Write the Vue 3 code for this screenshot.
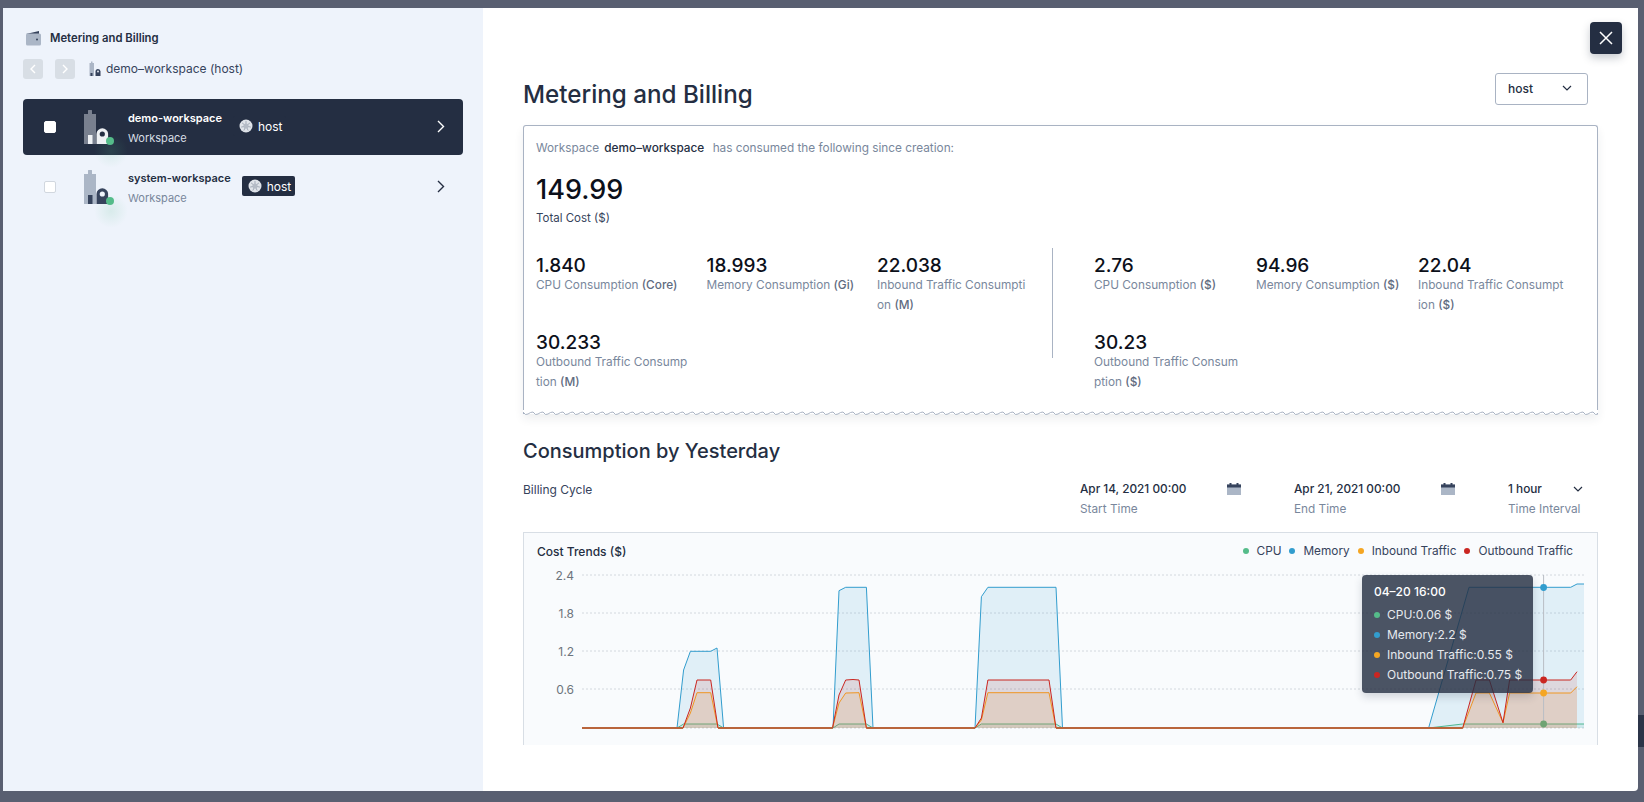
<template>
  <div class="page">
    <div class="peek-btn"></div>
    <div class="modal">
      <aside class="sidebar">
        <div class="side-head">
          <svg class="wallet" width="16" height="16" viewBox="0 0 16 16">
            <path d="M1 4 L14 1 V4 Z" fill="#36435c" />
            <rect x="1" y="3.5" width="15" height="12" rx="1.5" fill="#abb6c6" />
            <circle cx="12" cy="9.5" r="1" fill="#36435c" />
          </svg>
          <span>Metering and Billing</span>
        </div>
        <div class="side-nav">
          <button class="nav-btn">
            <svg width="8" height="12" viewBox="0 0 8 12"><path d="M6 2 L2 6 L6 10" fill="none" stroke="#fff" stroke-width="1.4" /></svg>
          </button>
          <button class="nav-btn">
            <svg width="8" height="12" viewBox="0 0 8 12"><path d="M2 2 L6 6 L2 10" fill="none" stroke="#fff" stroke-width="1.4" /></svg>
          </button>
          <svg class="crumb-icon" width="12" height="16" viewBox="0 0 12 16">
            <path d="M2 0.5 H3.5 V2 H5 V15 H0.5 V2 H2 Z" fill="#abb6c6" />
            <rect x="1.5" y="12" width="2" height="3" fill="#36435c" />
            <path d="M6.5 15 V10.5 a2.5 2.5 0 0 1 5 0 V15 Z" fill="#36435c" />
            <circle cx="9" cy="10.5" r="0.9" fill="#eff4fb" />
          </svg>
          <span class="crumb">demo–workspace (host)</span>
        </div>

        <div class="rows">
          <div v-for="w in workspaces" :key="w.name" class="row" :class="{ active: w.active }">
            <span class="check"></span>
            <div class="ws-icon">
              <svg width="30" height="36" viewBox="0 0 30 36">
                <path d="M4 0.5 Q4 0 4.5 0 H7.5 Q8 0 8 0.5 V4 H12 V34 H0 V4 H4 Z" :fill="w.active ? '#79808f' : '#abb6c6'" />
                <rect x="4" y="25" width="4.5" height="9" :fill="w.active ? '#eff1f4' : '#36435c'" />
                <path d="M12.5 34 V24 a5.8 5.8 0 0 1 11.6 0 V34 Z" :fill="w.active ? '#eff1f4' : '#36435c'" />
                <circle cx="18.3" cy="24" r="2.6" :fill="w.active ? '#242e42' : '#eff4fb'" />
                <circle cx="26" cy="31" r="4" fill="#55bc8a" />
              </svg>
              <span class="glow"></span>
            </div>
            <div class="ws-text">
              <div class="ws-name">{{ w.name }}</div>
              <div class="ws-sub">Workspace</div>
            </div>
            <div class="tag">
              <svg width="14" height="14" viewBox="0 0 14 14">
                <circle cx="7" cy="7" r="6.5" fill="#dfe3e9" />
                <g stroke="#a3abb8" stroke-width="1">
                  <line v-for="a in spokes" :key="a" x1="7" y1="7" :x2="7 + 5 * Math.cos(a)" :y2="7 + 5 * Math.sin(a)" />
                </g>
                <circle cx="7" cy="7" r="2.6" fill="#b4bbc6" />
              </svg>
              <span>host</span>
            </div>
            <svg class="chev" width="8" height="13" viewBox="0 0 8 13">
              <path d="M1 1 L6.5 6.5 L1 12" fill="none" :stroke="w.active ? '#fff' : '#242e42'" stroke-width="1.4" />
            </svg>
          </div>
        </div>
      </aside>

      <main class="main">
        <button class="close">
          <svg width="14" height="14" viewBox="0 0 14 14"><path d="M1 1 L13 13 M13 1 L1 13" stroke="#fff" stroke-width="1.5" /></svg>
        </button>

        <div class="title-row">
          <h1>Metering and Billing</h1>
          <div class="select">
            <span>host</span>
            <svg width="10" height="6" viewBox="0 0 10 6"><path d="M1 1 L5 5 L9 1" fill="none" stroke="#242e42" stroke-width="1.2" /></svg>
          </div>
        </div>

        <section class="card">
          <p class="intro">Workspace <b>demo–workspace</b> has consumed the following since creation:</p>
          <div class="total">149.99</div>
          <div class="total-label">Total Cost ($)</div>
          <div class="stats">
            <div class="stat-grid left">
              <div v-for="s in usage" :key="s.label" class="stat">
                <div class="stat-value">{{ s.value }}</div>
                <div class="stat-label">{{ s.label }} <b>{{ s.unit }}</b></div>
              </div>
            </div>
            <div class="divider"></div>
            <div class="stat-grid right">
              <div v-for="s in costs" :key="s.label" class="stat">
                <div class="stat-value">{{ s.value }}</div>
                <div class="stat-label">{{ s.label }} <b>{{ s.unit }}</b></div>
              </div>
            </div>
          </div>
          <svg class="wave" width="100%" height="8">
            <defs>
              <pattern id="wavy" width="10" height="8" patternUnits="userSpaceOnUse">
                <path d="M0 2 Q2.5 6 5 4 T10 2" fill="none" stroke="#a9b3c3" stroke-width="1" />
              </pattern>
            </defs>
            <rect width="100%" height="8" fill="url(#wavy)" />
          </svg>
        </section>

        <h2>Consumption by Yesterday</h2>

        <div class="filters">
          <span class="cycle">Billing Cycle</span>
          <div class="filter-items">
            <div v-for="d in dates" :key="d.label" class="filter date">
              <div class="filter-top">
                <span>{{ d.value }}</span>
                <svg width="14" height="12" viewBox="0 0 14 12">
                  <rect x="0" y="1.5" width="14" height="10.5" fill="#abb6c6" />
                  <rect x="0" y="1.5" width="14" height="3" fill="#36435c" />
                  <rect x="2.5" y="0" width="2" height="2" fill="#36435c" />
                  <rect x="9.5" y="0" width="2" height="2" fill="#36435c" />
                </svg>
              </div>
              <div class="filter-sub">{{ d.label }}</div>
            </div>
            <div class="filter interval">
              <div class="filter-top">
                <span>1 hour</span>
                <svg width="10" height="6" viewBox="0 0 10 6"><path d="M1 1 L5 5 L9 1" fill="none" stroke="#242e42" stroke-width="1.2" /></svg>
              </div>
              <div class="filter-sub">Time Interval</div>
            </div>
          </div>
        </div>

        <section class="chart">
          <div class="chart-head">
            <span class="chart-title">Cost Trends ($)</span>
            <div class="legend">
              <span v-for="s in series" :key="s.name" class="legend-item">
                <i :style="{ background: s.color }"></i>{{ s.name }}
              </span>
            </div>
          </div>

          <svg class="plot" width="1073" height="172" viewBox="524 573 1073 172">
            <g v-for="t in ticks" :key="t.label">
              <line x1="582" :x2="1584" :y1="t.y" :y2="t.y" stroke="#d3d8de" stroke-dasharray="2 2" />
              <text x="574" :y="t.y + 5" text-anchor="end" class="tick">{{ t.label }}</text>
            </g>
            <line x1="582" x2="1584" y1="728" y2="728" stroke="#d3d8de" stroke-dasharray="2 2" />
            <g v-for="s in series" :key="s.name + '-line'">
              <polygon :points="areaPoints(s.points)" :fill="s.color" fill-opacity="0.12" />
              <polyline :points="linePoints(s.points)" fill="none" :stroke="s.color" />
            </g>
            <path :d="baseline" stroke="#b9653c" stroke-width="2" fill="none" />
            <line x1="1543.6" x2="1543.6" y1="575" y2="728" stroke="#b9bdc4" />
            <circle v-for="m in markers" :key="m.color" cx="1543.6" :cy="m.y" r="3.4" :fill="m.color" />
          </svg>

          <div class="tooltip">
            <div class="tip-title">04–20 16:00</div>
            <div v-for="t in tooltip" :key="t.text" class="tip-row">
              <i :style="{ background: t.color }"></i>{{ t.text }}
            </div>
          </div>
        </section>
      </main>
    </div>
  </div>
</template>

<script setup>
const workspaces = [
  { name: "demo-workspace", active: true },
  { name: "system-workspace", active: false },
];

// seven spokes of the cluster wheel
const spokes = Array.from({ length: 7 }, (_, i) => (i * 2 * Math.PI) / 7 - Math.PI / 2);

const usage = [
  { value: "1.840", label: "CPU Consumption", unit: "(Core)" },
  { value: "18.993", label: "Memory Consumption", unit: "(Gi)" },
  { value: "22.038", label: "Inbound Traffic Consumption", unit: "(M)" },
  { value: "30.233", label: "Outbound Traffic Consumption", unit: "(M)" },
];

const costs = [
  { value: "2.76", label: "CPU Consumption", unit: "($)" },
  { value: "94.96", label: "Memory Consumption", unit: "($)" },
  { value: "22.04", label: "Inbound Traffic Consumption", unit: "($)" },
  { value: "30.23", label: "Outbound Traffic Consumption", unit: "($)" },
];

const dates = [
  { value: "Apr 14, 2021 00:00", label: "Start Time" },
  { value: "Apr 21, 2021 00:00", label: "End Time" },
];

const ticks = [
  { label: "2.4", y: 575 },
  { label: "1.8", y: 613 },
  { label: "1.2", y: 651 },
  { label: "0.6", y: 689 },
];

const series = [
  {
    name: "CPU",
    color: "#55bc8a",
    points: [
      [582, 728], [677, 728], [683.6, 724], [717, 724], [723.6, 728], [833, 728], [839, 724], [866.4, 724],
      [873, 728], [975, 728], [981.4, 724], [1056, 724], [1062.5, 728], [1428.6, 728], [1462.7, 724], [1584, 724],
    ],
  },
  {
    name: "Memory",
    color: "#329dce",
    points: [
      [582, 728], [677, 728], [683.6, 670], [690.4, 651.3], [710.7, 651.3], [717, 648], [723.6, 728],
      [833, 728], [839, 590.7], [845.7, 587.3], [866.4, 587.3], [873, 728],
      [975, 728], [981.4, 596.7], [987.9, 587.3], [1056, 587.3], [1062.5, 728],
      [1428.6, 728], [1469, 587.3], [1570.7, 587.3], [1577, 584], [1584, 584],
    ],
  },
  {
    name: "Inbound Traffic",
    color: "#f5a623",
    points: [
      [582, 728], [683, 728], [690.4, 713], [697, 692.7], [710.7, 692.7], [718, 728],
      [832.5, 728], [839, 703], [845.7, 693], [859, 692.7], [866.4, 728],
      [975, 728], [981.4, 720], [987.9, 692.7], [1049, 692.7], [1056, 728],
      [1462.7, 728], [1476, 693], [1489.4, 693], [1503, 722.7], [1509.6, 693], [1570.7, 693], [1577, 686.7],
    ],
  },
  {
    name: "Outbound Traffic",
    color: "#ca2621",
    points: [
      [582, 728], [683, 728], [690.4, 708], [697, 680], [710.7, 680], [718, 728],
      [832.5, 728], [839, 695], [845.7, 680], [853, 679.5], [859, 680], [866.4, 728],
      [975, 728], [981.4, 718], [987.9, 680], [1049, 680], [1056, 728],
      [1462.7, 728], [1476, 680], [1489.4, 680], [1503, 722.7], [1509.6, 680], [1570.7, 680], [1577, 671.7],
    ],
  },
];

const baseline = "M582 728 H683 M718 728 H832.5 M866.4 728 H975 M1056 728 H1462.7";

const markers = [
  { color: "#329dce", y: 587.5 },
  { color: "#ca2621", y: 680 },
  { color: "#f5a623", y: 693 },
  { color: "#6fa373", y: 724 },
];

const tooltip = [
  { color: "#55bc8a", text: "CPU:0.06 $" },
  { color: "#329dce", text: "Memory:2.2 $" },
  { color: "#f5a623", text: "Inbound Traffic:0.55 $" },
  { color: "#ca2621", text: "Outbound Traffic:0.75 $" },
];

const linePoints = (pts) => pts.map((p) => p.join(",")).join(" ");

const areaPoints = (pts) => {
  const last = pts[pts.length - 1][0];
  return `${linePoints(pts)} ${last},728 582,728`;
};
</script>

<style>
html,
body {
  margin: 0;
  overflow: hidden;
}
</style>

<style scoped>
.page {
  position: relative;
  height: 802px;
  padding: 8px 6px 11px 3px;
  box-sizing: border-box;
  background: #595f71;
  font-family: Inter, "Noto Sans", sans-serif;
  font-size: 12px;
  color: #242e42;
  overflow: hidden;
}

.peek-btn {
  position: absolute;
  top: 715px;
  left: 1626px;
  width: 32px;
  height: 32px;
  border-radius: 8px;
  background: #2b3448;
}

.modal {
  position: relative;
  display: flex;
  height: 100%;
  background: #fff;
  border-radius: 0 0 4px 4px;
}

.sidebar {
  width: 480px;
  flex-shrink: 0;
  padding: 20px 20px 0;
  box-sizing: border-box;
  background: #eef3fb;
}

.side-head {
  display: flex;
  align-items: center;
  gap: 9px;
  height: 20px;
  padding-left: 2px;
  font-size: 11.3px;
  font-weight: 600;
}

.side-nav {
  display: flex;
  align-items: center;
  margin-top: 11px;
  height: 20px;
}

.nav-btn {
  display: flex;
  align-items: center;
  justify-content: center;
  width: 20px;
  height: 20px;
  margin-right: 12px;
  padding: 0;
  border: 0;
  border-radius: 3px;
  background: #d8dee5;
}

.crumb-icon {
  margin-left: 2px;
}

.crumb {
  margin: 0 0 2px 5px;
  font-size: 12px;
  color: #36435c;
}

.rows {
  display: flex;
  flex-direction: column;
  gap: 4px;
  margin-top: 20px;
}

.row {
  display: flex;
  align-items: center;
  height: 56px;
  padding: 0 18px 0 21px;
  border-radius: 4px;
}

.row.active {
  background: #242e42;
  color: #fff;
}

.check {
  width: 12px;
  height: 12px;
  border: 1px solid #d1d7df;
  border-radius: 2px;
  background: #fff;
  box-sizing: border-box;
}

.active .check {
  border-color: #fff;
}

.ws-icon {
  position: relative;
  width: 30px;
  height: 34px;
  margin: 0 14px 0 28px;
}

.ws-icon svg {
  position: relative;
  z-index: 1;
  display: block;
}

.glow {
  position: absolute;
  left: 10px;
  top: 24px;
  width: 34px;
  height: 34px;
  border-radius: 50%;
  background: radial-gradient(circle, rgba(85, 188, 138, 0.14), rgba(85, 188, 138, 0) 70%);
}

.ws-text {
  padding-top: 2px;
  line-height: 20px;
  font-size: 11px;
}

.ws-name {
  font-weight: 600;
}

.ws-sub {
  color: #79879c;
}

.active .ws-sub {
  color: #d8dee5;
}

.tag {
  display: flex;
  align-items: center;
  gap: 5px;
  height: 20px;
  margin: 0 0 2px 11px;
  padding: 0 4px 0 6px;
  border-radius: 2px;
  background: #242e42;
  color: #fff;
  font-size: 12px;
}

.chev {
  margin: 0 0 2px auto;
}

.main {
  flex: 1;
  min-width: 0;
  padding: 65px 40px 0;
}

.close {
  position: absolute;
  top: 14px;
  right: 16px;
  display: flex;
  align-items: center;
  justify-content: center;
  width: 32px;
  height: 32px;
  padding: 0;
  border: 0;
  border-radius: 4px;
  background: #242e42;
  box-shadow: 0 4px 8px rgba(36, 46, 66, 0.25);
}

.title-row {
  display: flex;
  align-items: center;
  justify-content: space-between;
  height: 32px;
  padding-right: 10px;
}

h1 {
  margin: 10px 0 0;
  font-size: 24.2px;
  font-weight: 500;
}

.select {
  display: flex;
  align-items: center;
  justify-content: space-between;
  width: 93px;
  height: 32px;
  padding: 0 15px 2px 12px;
  box-sizing: border-box;
  border: 1px solid #a9b3c3;
  border-radius: 3px;
  font-weight: 500;
}

.card {
  position: relative;
  height: 289px;
  margin-top: 20px;
  padding: 12px 12px 0;
  box-sizing: border-box;
  border: 1px solid #a9b3c3;
  border-bottom: 0;
  border-radius: 3px 3px 0 0;
  box-shadow: 0 5px 10px rgba(36, 46, 66, 0.08);
}

.intro {
  margin: 0;
  line-height: 20px;
  font-size: 11.8px;
  color: #79879c;
}

.intro b {
  margin: 0 5px 0 2px;
  font-weight: 500;
  color: #242e42;
}

.total {
  margin-top: 13px;
  line-height: 37px;
  font-size: 27px;
  font-weight: 500;
  color: #0c101a;
}

.total-label {
  line-height: 20px;
  font-size: 11.5px;
  color: #36435c;
}

.stats {
  display: flex;
  margin-top: 26px;
}

.stat-grid {
  display: grid;
  align-content: start;
  row-gap: 16px;
}

.stat-grid.left {
  grid-template-columns: repeat(3, 170.5px);
  width: 516px;
}

.stat-grid.right {
  grid-template-columns: repeat(3, 162px);
  margin-left: 41px;
}

.divider {
  width: 1px;
  height: 110px;
  margin-top: -6px;
  background: #a9b3c3;
}

.stat-value {
  margin-top: 2px;
  line-height: 19px;
  font-size: 19px;
  font-weight: 500;
  color: #0c101a;
}

.stat-label {
  line-height: 20px;
  font-size: 11.8px;
  color: #79879c;
  word-break: break-all;
}

.left .stat-label {
  width: 153px;
}

.right .stat-label {
  width: 147px;
}

.stat-label b {
  font-weight: 500;
  color: #5f6b80;
}

.wave {
  position: absolute;
  left: -1px;
  bottom: -4px;
  width: calc(100% + 2px);
  background: linear-gradient(#fff 40%, transparent 40%);
}

h2 {
  margin: 23px 0 0;
  line-height: 28px;
  font-size: 20px;
  font-weight: 500;
}

.filters {
  display: flex;
  justify-content: space-between;
  margin-top: 14px;
}

.cycle {
  line-height: 22px;
  color: #36435c;
}

.filter-items {
  display: flex;
  gap: 53px;
  padding-right: 15px;
}

.filter-top {
  display: flex;
  align-items: center;
  justify-content: space-between;
  height: 20px;
  font-size: 11.8px;
  font-weight: 500;
}

.filter-sub {
  line-height: 21px;
  font-size: 11.8px;
  color: #79879c;
}

.date {
  width: 161px;
}

.interval {
  width: 75px;
}

.chart {
  position: relative;
  height: 213px;
  margin-top: 12px;
  box-sizing: border-box;
  border: 1px solid #d8dee5;
  border-bottom: 0;
  background: #f9fbfd;
}

.chart-head {
  display: flex;
  align-items: center;
  justify-content: space-between;
  height: 40px;
  padding: 0 24px 4px 13px;
  box-sizing: border-box;
}

.chart-title {
  font-weight: 500;
}

.legend {
  display: flex;
  gap: 8px;
  font-size: 11.8px;
  color: #36435c;
}

.legend-item i {
  display: inline-block;
  width: 6px;
  height: 6px;
  margin-right: 8px;
  vertical-align: 1px;
  border-radius: 50%;
}

.plot {
  display: block;
  overflow: visible;
}

.tick {
  font-size: 12px;
  fill: #6d747c;
}

.tooltip {
  position: absolute;
  top: 42px;
  left: 838px;
  width: 171px;
  height: 118px;
  padding: 7px 12px;
  box-sizing: border-box;
  border-radius: 4px;
  background: rgba(36, 46, 66, 0.82);
  box-shadow: 0 4px 8px rgba(36, 46, 66, 0.18);
  color: #e6e9ee;
}

.tip-title {
  height: 23px;
  line-height: 20px;
  font-weight: 500;
  color: #fff;
}

.tip-row {
  line-height: 20px;
  white-space: nowrap;
}

.tip-row i {
  display: inline-block;
  width: 6px;
  height: 6px;
  margin-right: 7px;
  vertical-align: 1px;
  border-radius: 50%;
}
</style>
